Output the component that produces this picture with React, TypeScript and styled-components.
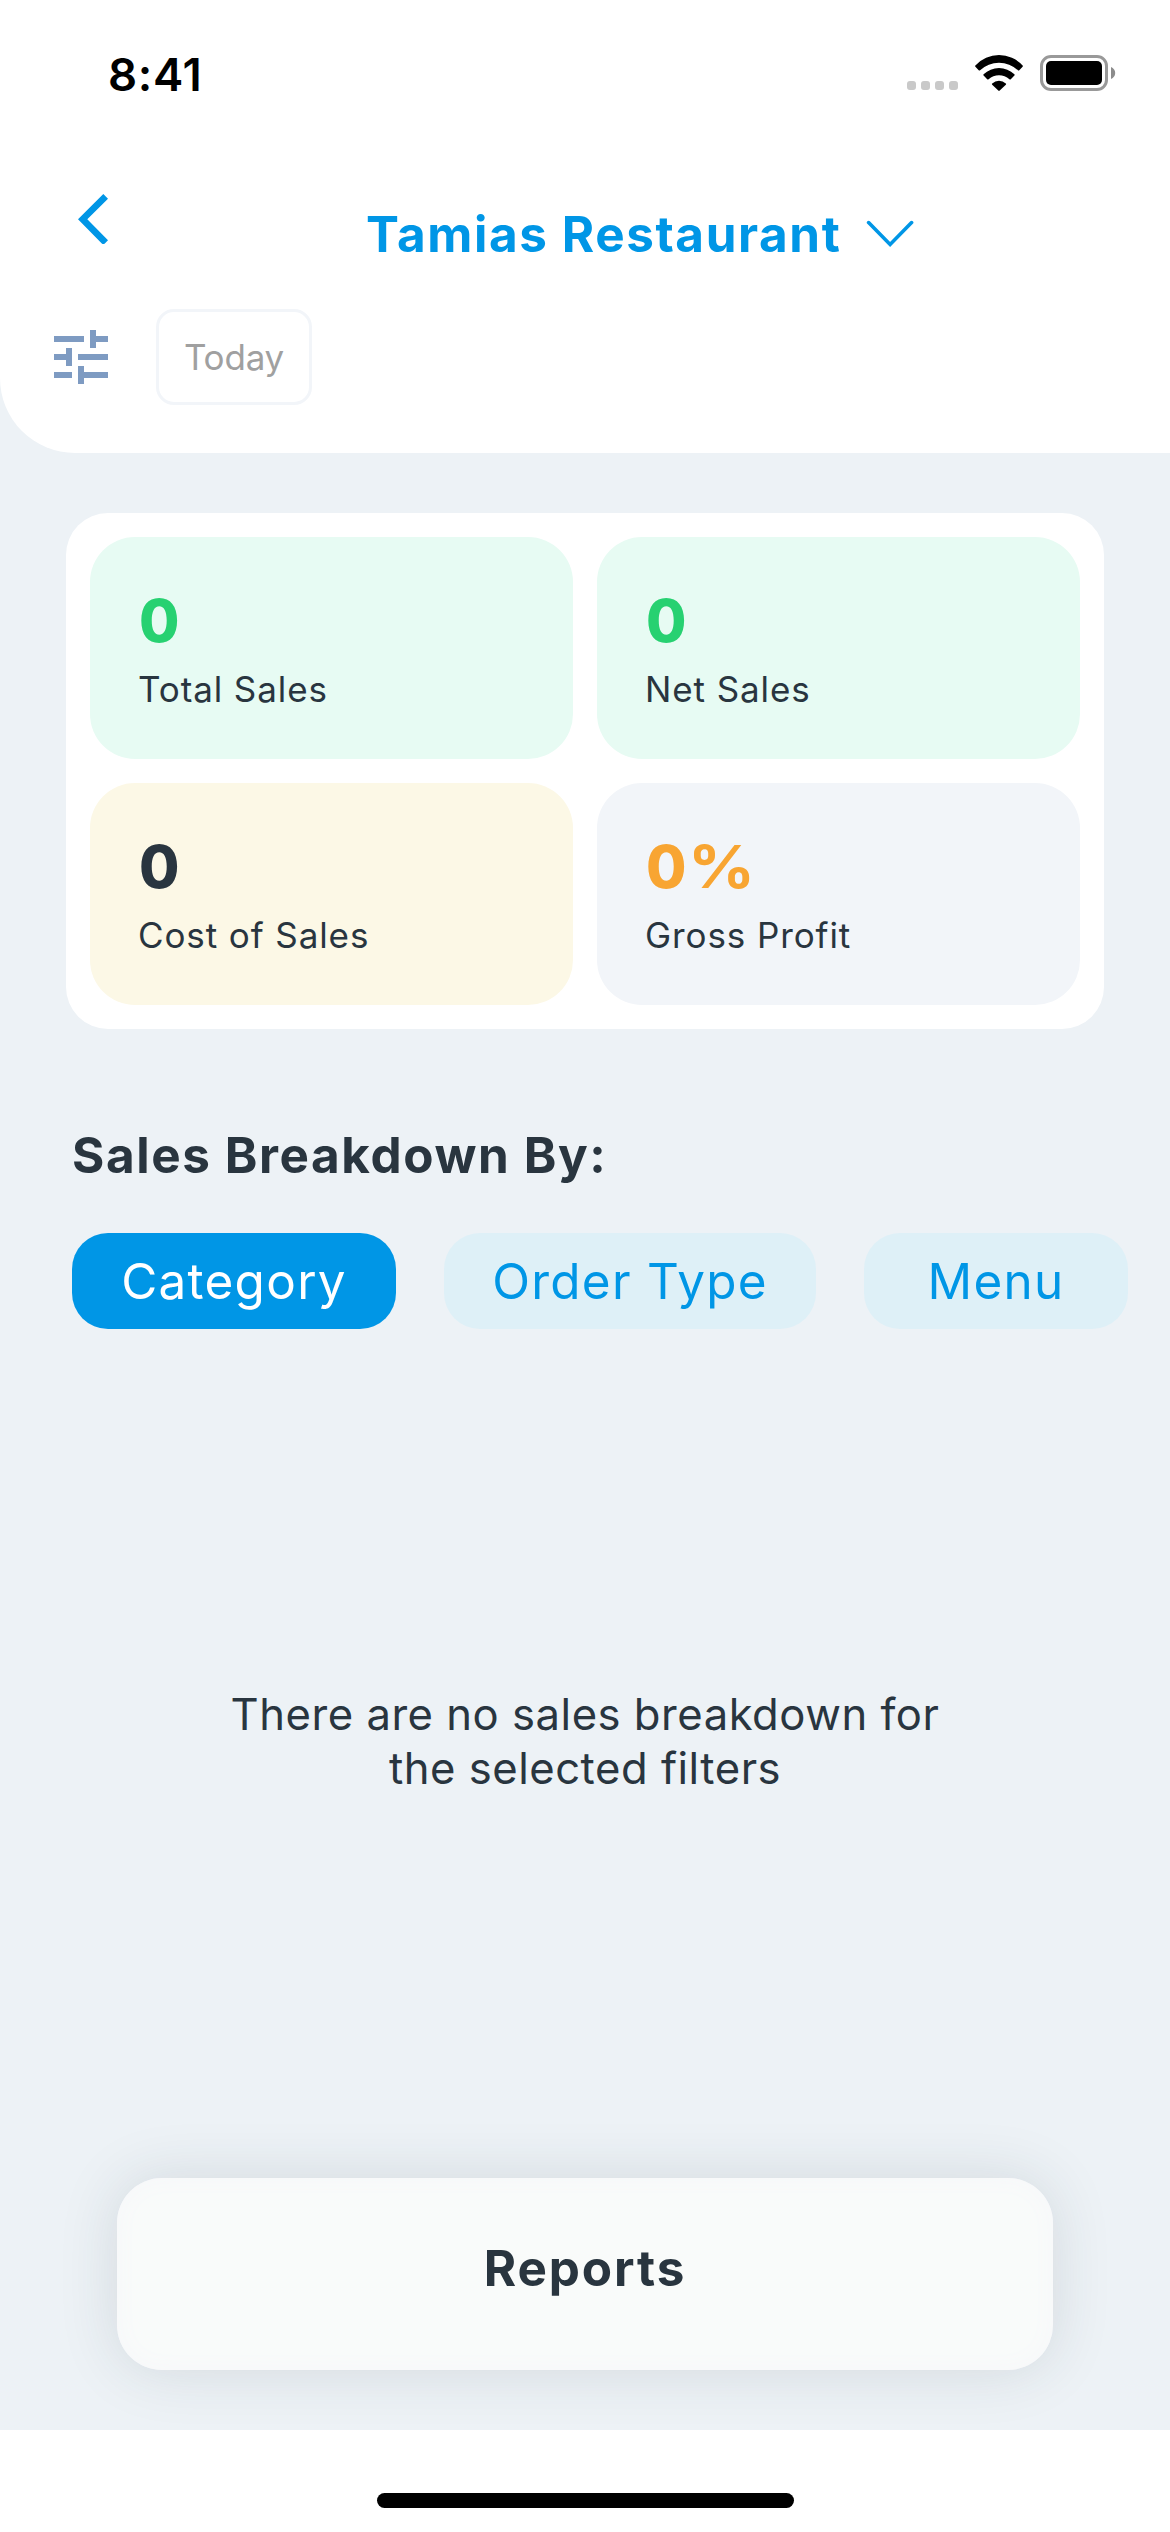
import React from "react";
import styled, { createGlobalStyle } from "styled-components";

const color = {
  blue: "#0096e6",
  ink: "#29353f",
  page: "#edf2f6",
  green: "#27d171",
  orange: "#f8a532",
};

const GlobalStyle = createGlobalStyle`
  * { box-sizing: border-box; }
  body {
    margin: 0;
    background: #fff;
    font-family: Inter, "Liberation Sans", sans-serif;
    color: ${color.ink};
  }
  button {
    font-family: inherit;
    border: 0;
    padding: 0;
    background: none;
    color: inherit;
  }
  svg { display: block; }
`;

const Screen = styled.div`
  width: 1170px;
  height: 2532px;
  display: flex;
  flex-direction: column;
  background: ${color.page};
  overflow: hidden;
`;

const Header = styled.header`
  height: 453px;
  background: #fff;
  border-bottom-left-radius: 75px;
`;

const StatusBar = styled.div`
  height: 141px;
  padding: 45px 54px 0 108px;
  display: flex;
  justify-content: space-between;
  align-items: flex-start;
`;

const Clock = styled.span`
  font-size: 45.5px;
  font-weight: 600;
  line-height: 60px;
  letter-spacing: 0.7px;
  color: #000;
`;

const StatusIcons = styled.div`
  display: flex;
  align-items: flex-end;
  padding-top: 10px;
`;

const Signal = styled.div`
  display: flex;
  gap: 5px;
  padding-bottom: 1px;
  margin-right: 17px;
`;

const SignalDot = styled.i`
  width: 9px;
  height: 9px;
  border-radius: 3px;
  background: #c9c9c9;
`;

const Battery = styled.span`
  margin-left: 17px;
`;

const NavBar = styled.nav`
  height: 168px;
  display: flex;
  align-items: flex-start;
`;

const BackButton = styled.button`
  width: 366px;
  padding: 48px 0 0 72px;
`;

const VenueButton = styled.button`
  display: flex;
  align-items: center;
  gap: 23px;
  padding-top: 63px;
  color: ${color.blue};
  font-size: 49.4px;
  font-weight: 660;
  line-height: 60px;
  letter-spacing: 1.6px;
  white-space: nowrap;
`;

const FilterRow = styled.div`
  display: flex;
  align-items: center;
  gap: 39px;
  padding-left: 45px;
`;

const DateChip = styled.button`
  width: 156px;
  height: 96px;
  padding-bottom: 1px;
  border: 3px solid #f2f5f9;
  border-radius: 18px;
  color: #a0a0a0;
  font-size: 35px;
  font-weight: 380;
  letter-spacing: -0.2px;
`;

const Content = styled.main`
  flex: 1;
  display: flex;
  flex-direction: column;
  padding: 60px 0;
`;

const Summary = styled.section`
  margin: 0 66px;
  padding: 24px;
  display: grid;
  grid-template-columns: 1fr 1fr;
  grid-auto-rows: 222px;
  gap: 24px;
  background: #fff;
  border-radius: 42px;
`;

const Tile = styled.div<{ $bg: string }>`
  padding: 48px;
  border-radius: 45px;
  background: ${(p) => p.$bg};
`;

const TileValue = styled.div<{ $color: string }>`
  display: flex;
  gap: 2px;
  padding-left: 1px;
  color: ${(p) => p.$color};
  font-size: 58.5px;
  font-weight: 810;
  line-height: 72px;
`;

const Percent = styled.span`
  font-weight: 710;
  transform: scaleX(1.13);
  transform-origin: left;
`;

const TileLabel = styled.div`
  margin-top: 10px;
  font-size: 35px;
  line-height: 45px;
  letter-spacing: 0.9px;
`;

const SectionTitle = styled.h2`
  margin: 96px 0 0 72px;
  font-size: 49.4px;
  font-weight: 650;
  line-height: 60px;
  letter-spacing: 1.6px;
`;

const Tabs = styled.div`
  display: flex;
  gap: 48px;
  margin: 48px 0 0 72px;
`;

const Tab = styled.button<{ $width: number; $active?: boolean }>`
  flex: none;
  width: ${(p) => p.$width}px;
  height: 96px;
  border-radius: 36px;
  background: ${(p) => (p.$active ? color.blue : "#def0f7")};
  color: ${(p) => (p.$active ? "#fff" : color.blue)};
  font-size: 49.4px;
  font-weight: 430;
  letter-spacing: 1.3px;
  white-space: nowrap;
`;

const EmptyMessage = styled.p`
  width: 740px;
  margin: 359px auto 0;
  text-align: center;
  font-size: 43.6px;
  font-weight: 380;
  line-height: 54px;
  letter-spacing: 0.52px;
`;

const ReportsButton = styled.button`
  width: 936px;
  height: 192px;
  margin: auto auto 0;
  padding-bottom: 12px;
  border-radius: 45px;
  background: #f9fbfa;
  box-shadow: 0 0 60px rgba(41, 53, 63, 0.13), inset 0 0 24px #f6f7fa;
  font-size: 49.4px;
  font-weight: 650;
  letter-spacing: 1.9px;
`;

const HomeArea = styled.footer`
  height: 102px;
  padding-top: 63px;
  background: #fff;
  z-index: 1;
`;

const HomeIndicator = styled.div`
  width: 417px;
  height: 15px;
  margin: 0 auto;
  border-radius: 8px;
  background: #000;
`;

const WifiIcon = () => (
  <svg width="48" height="36" viewBox="0 0 48 36">
    <path d="M.4 10.400A32 32 0 0 1 47.600 10.400q.7.7 0 1.400l-3.300 3.400q-.7.7-1.400 0a27.600 27.600 0 0 0-37.800 0q-.7.7-1.400 0L.4 11.800q-.7-.7 0-1.400z" />
    <path d="M8.600 19.200A22.500 22.500 0 0 1 39.400 19.200q.7.7 0 1.400l-3.600 3.600q-.7.7-1.400 0a16 16 0 0 0-20.800 0q-.7.7-1.400 0L8.600 20.600q-.7-.7 0-1.400z" />
    <path d="M17.200 28.400a10 10 0 0 1 13.600 0q.7.7 0 1.400l-6.100 5.800q-.7.600-1.400 0l-6.100-5.800q-.7-.7 0-1.400z" />
  </svg>
);

const BatteryIcon = () => (
  <svg width="76" height="36" viewBox="0 0 76 36">
    <rect x="1.500" y="1.500" width="65" height="33" rx="9.500" fill="none" stroke="#999" strokeWidth="3" />
    <rect x="6" y="6" width="56" height="24" rx="5" />
    <path d="M71 12v12c2.600-1 4.200-3.400 4.200-6S73.600 13 71 12z" fill="#8c8c8c" />
  </svg>
);

const BackIcon = () => (
  <svg width="36" height="60" viewBox="0 0 36 60" fill={color.blue}>
    <path d="M6 30.300 31.300 5 36 9.700 15.300 30.300 36 51.200 32.800 54.500Q31.300 55.500 29.800 54.500z" />
  </svg>
);

const ChevronDown = () => (
  <svg width="50" height="30" viewBox="0 0 50 30" fill="none" stroke={color.blue} strokeWidth="3.600" strokeLinecap="round">
    <path d="M4.600 3.600 26.100 25.400 47.600 3.600" />
  </svg>
);

const TuneIcon = () => (
  <svg width="72" height="72" viewBox="0 0 24 24" fill="#7e9bc2" shapeRendering="crispEdges">
    <path d="M3 17v2h6v-2H3zM3 5v2h10V5H3zm10 16v-2h8v-2h-8v-2h-2v6h2zM7 9v2H3v2h4v2h2V9H7zm14 4v-2H11v2h10zm-6-4h2V7h4V5h-4V3h-2v6z" />
  </svg>
);

const metrics = [
  { label: "Total Sales", value: "0", tint: color.green, bg: "#e7fbf3" },
  { label: "Net Sales", value: "0", tint: color.green, bg: "#e7fbf3" },
  { label: "Cost of Sales", value: "0", tint: color.ink, bg: "#fcf8e6" },
  { label: "Gross Profit", value: "0", unit: "%", tint: color.orange, bg: "#f2f5f9" },
];

const tabs = [
  { name: "Category", width: 324, active: true },
  { name: "Order Type", width: 372 },
  { name: "Menu", width: 264 },
];

export default function App() {
  return (
    <Screen>
      <GlobalStyle />
      <Header>
        <StatusBar>
          <Clock>8:41</Clock>
          <StatusIcons>
            <Signal>
              <SignalDot />
              <SignalDot />
              <SignalDot />
              <SignalDot />
            </Signal>
            <WifiIcon />
            <Battery>
              <BatteryIcon />
            </Battery>
          </StatusIcons>
        </StatusBar>
        <NavBar>
          <BackButton aria-label="Back">
            <BackIcon />
          </BackButton>
          <VenueButton>
            Tamias Restaurant
            <ChevronDown />
          </VenueButton>
        </NavBar>
        <FilterRow>
          <TuneIcon />
          <DateChip>Today</DateChip>
        </FilterRow>
      </Header>
      <Content>
        <Summary>
          {metrics.map((m) => (
            <Tile key={m.label} $bg={m.bg}>
              <TileValue $color={m.tint}>
                {m.value}
                {m.unit && <Percent>{m.unit}</Percent>}
              </TileValue>
              <TileLabel>{m.label}</TileLabel>
            </Tile>
          ))}
        </Summary>
        <SectionTitle>Sales Breakdown By:</SectionTitle>
        <Tabs>
          {tabs.map((t) => (
            <Tab key={t.name} $width={t.width} $active={t.active}>
              {t.name}
            </Tab>
          ))}
        </Tabs>
        <EmptyMessage>There are no sales breakdown for the selected filters</EmptyMessage>
        <ReportsButton>Reports</ReportsButton>
      </Content>
      <HomeArea>
        <HomeIndicator />
      </HomeArea>
    </Screen>
  );
}
